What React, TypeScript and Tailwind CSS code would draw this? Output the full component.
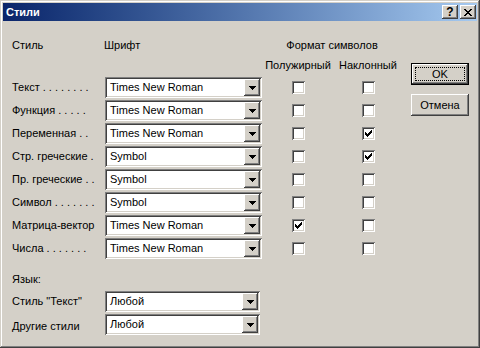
import React from "react";

const sunken =
  "shadow-[inset_1px_1px_0_#808080,inset_-1px_-1px_0_#ffffff,inset_2px_2px_0_#404040,inset_-2px_-2px_0_#d4d0c8]";
const raised =
  "shadow-[inset_-1px_-1px_0_#404040,inset_1px_1px_0_#ffffff,inset_-2px_-2px_0_#808080,inset_2px_2px_0_#d4d0c8]";

interface TRow {
  label: string
  font: string
  bold: boolean
  italic: boolean
}

const rows: TRow[] = [
  { label: "Текст . . . . . . . .", font: "Times New Roman", bold: false, italic: false },
  { label: "Функция . . . . .", font: "Times New Roman", bold: false, italic: false },
  { label: "Переменная . .", font: "Times New Roman", bold: false, italic: true },
  { label: "Стр. греческие .", font: "Symbol", bold: false, italic: true },
  { label: "Пр. греческие . .", font: "Symbol", bold: false, italic: false },
  { label: "Символ . . . . . . .", font: "Symbol", bold: false, italic: false },
  { label: "Матрица-вектор", font: "Times New Roman", bold: true, italic: false },
  { label: "Числа . . . . . . .", font: "Times New Roman", bold: false, italic: false },
];

function Arrow() {
  return (
    <svg width="7" height="4" viewBox="0 0 7 4" shapeRendering="crispEdges">
      <rect x="0" y="0" width="7" height="1" fill="#000" />
      <rect x="1" y="1" width="5" height="1" fill="#000" />
      <rect x="2" y="2" width="3" height="1" fill="#000" />
      <rect x="3" y="3" width="1" height="1" fill="#000" />
    </svg>
  );
}

function Combo({ value, width }: { value: string; width: string }) {
  return (
    <div className={`flex h-[21px] ${width} bg-white p-[2px] ${sunken}`}>
      <div className="flex-1 pl-[3px] leading-[17px] text-black whitespace-nowrap overflow-hidden">
        {value}
      </div>
      <div className={`w-[16px] h-[17px] bg-[#d4d0c8] flex items-center justify-center ${raised}`}>
        <Arrow />
      </div>
    </div>
  );
}

function Check({ checked }: { checked: boolean }) {
  return (
    <div className={`w-[13px] h-[13px] bg-white p-[3px] ${sunken}`}>
      {checked && (
        <svg width="7" height="7" viewBox="0 0 7 7" shapeRendering="crispEdges" className="block">
          <path
            fill="#000"
            d="M6 0h1v3h-1v1h-1v1h-1v1h-1v1h-1v-1h-1v-1h-1v-3h1v1h1v1h1v-1h1v-1h1z"
          />
        </svg>
      )}
    </div>
  );
}

function CloseGlyph() {
  return (
    <svg width="8" height="7" viewBox="0 0 8 7" shapeRendering="crispEdges">
      <path
        fill="#000"
        d="M0 0h2v1h1v1h2v-1h1v-1h2v1h-1v1h-1v1h-1v1h1v1h1v1h1v1h-2v-1h-1v-1h-2v1h-1v1h-2v-1h1v-1h1v-1h1v-1h-1v-1h-1v-1h-1z"
      />
    </svg>
  );
}

export default function App() {
  return (
    <div className="w-[480px] h-[348px] bg-[#d4d0c8] p-[3px] flex flex-col font-['Liberation_Sans',Arial,sans-serif] text-[11px] text-black shadow-[inset_-1px_-1px_0_#404040,inset_1px_1px_0_#d4d0c8,inset_-2px_-2px_0_#808080,inset_2px_2px_0_#ffffff]">
      {/* title bar */}
      <div className="h-[18px] flex items-center pl-[3px] pr-[1px] bg-gradient-to-r from-[#0a246a] to-[#a6caf0]">
        <span className="flex-1 font-bold text-white leading-[14px]">Стили</span>
        <div className="flex gap-[2px]">
          <div className={`w-[16px] h-[14px] bg-[#d4d0c8] flex items-center justify-center font-bold text-[12px] leading-[14px] ${raised}`}>
            ?
          </div>
          <div className={`w-[16px] h-[14px] bg-[#d4d0c8] flex items-center justify-center ${raised}`}>
            <CloseGlyph />
          </div>
        </div>
      </div>

      {/* body */}
      <div className="flex-1 pt-[17px] pl-[9px] flex flex-col">
        <div className="flex">
          <div className="w-[390px] flex flex-col">
            <div className="flex h-[14px] leading-[14px]">
              <div className="w-[92px]">Стиль</div>
              <div className="w-[158px]">Шрифт</div>
              <div className="w-[140px] text-center">Формат символов</div>
            </div>
            <div className="flex h-[14px] leading-[14px] mt-[6px]">
              <div className="w-[250px]" />
              <div className="w-[72px] text-center">Полужирный</div>
              <div className="w-[68px] text-center">Наклонный</div>
            </div>
            <div className="flex flex-col gap-[2px] mt-[5px]">
              {rows.map((row) => (
                <div key={row.label} className="flex items-center h-[21px]">
                  <div className="w-[93px] whitespace-nowrap">{row.label}</div>
                  <Combo value={row.font} width="w-[157px]" />
                  <div className="w-[72px] flex justify-center">
                    <Check checked={row.bold} />
                  </div>
                  <div className="w-[68px] flex justify-center">
                    <Check checked={row.italic} />
                  </div>
                </div>
              ))}
            </div>
          </div>

          <div className="ml-[9px] w-[58px] pt-[25px] flex flex-col gap-[9px]">
            <div className="h-[22px] border border-black">
              <div className={`h-full bg-[#d4d0c8] p-[3px] ${raised}`}>
                <div className="h-full border border-dotted border-black flex items-center justify-center leading-[12px]">
                  OK
                </div>
              </div>
            </div>
            <div className={`h-[22px] bg-[#d4d0c8] flex items-center justify-center ${raised}`}>
              Отмена
            </div>
          </div>
        </div>

        <div className="h-[14px] leading-[14px] mt-[13px]">Язык:</div>
        <div className="flex flex-col gap-[2px] mt-[5px]">
          <div className="flex items-center h-[21px]">
            <div className="w-[93px]">Стиль "Текст"</div>
            <Combo value="Любой" width="w-[155px]" />
          </div>
          <div className="flex items-center h-[21px]">
            <div className="w-[93px] pt-[4px]">Другие стили</div>
            <Combo value="Любой" width="w-[155px]" />
          </div>
        </div>
      </div>
    </div>
  );
}
